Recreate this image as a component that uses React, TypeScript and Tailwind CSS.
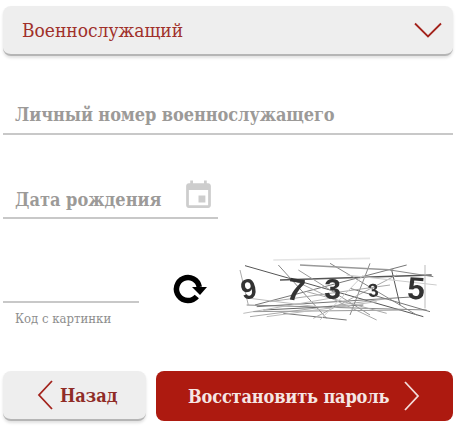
import React from 'react'

const serif = { fontFamily: '"DejaVu Serif Condensed", "DejaVu Serif", "Liberation Serif", serif' }

// captcha noise, coords are in the 3x crop space
const noise: [number, number, number, number, string, number][] = [
  [45, 32, 580, 185, '#555', 3],
  [150, 75, 605, 60, '#555', 4],
  [75, 150, 530, 30, '#777', 3],
  [50, 150, 590, 165, '#888', 3],
  [80, 155, 560, 125, '#777', 3],
  [60, 185, 480, 130, '#aaa', 3],
  [145, 30, 290, 190, '#888', 3],
  [205, 45, 420, 180, '#999', 3],
  [300, 25, 560, 180, '#888', 3],
  [420, 25, 360, 180, '#888', 3],
  [485, 45, 510, 150, '#555', 3],
  [585, 30, 585, 160, '#bbb', 3],
  [30, 45, 55, 150, '#aaa', 3],
  [210, 30, 490, 45, '#999', 4],
  [130, 15, 420, 10, '#e4e4e4', 5],
  [160, 175, 350, 195, '#777', 3],
  [100, 165, 400, 150, '#666', 3],
  [250, 190, 500, 60, '#aaa', 3],
  [360, 100, 600, 170, '#777', 3],
  [120, 140, 480, 90, '#aaa', 3],
  [40, 175, 300, 130, '#bbb', 3],
  [200, 80, 440, 195, '#aaa', 3],
  [350, 60, 620, 90, '#ccc', 3],
  [70, 170, 520, 165, '#999', 3],
  [110, 185, 440, 140, '#bbb', 3],
  [230, 110, 470, 175, '#aaa', 3],
  [480, 45, 610, 65, '#888', 3],
  [270, 195, 400, 60, '#ccc', 3],
  [60, 130, 300, 160, '#bbb', 3],
]

const digits: [string, number, number, number, number][] = [
  ['9', 62, 130, -12, 84],
  ['7', 192, 136, 10, 94],
  ['3', 308, 132, 0, 90],
  ['3', 432, 125, -6, 56],
  ['5', 556, 132, 4, 94],
]

function Captcha() {
  return (
    <svg width="210" height="75" viewBox="0 0 630 225" className="shrink-0 blur-[0.4px]">
      {noise.map(([x1, y1, x2, y2, c, w], i) => (
        <line key={i} x1={x1} y1={y1} x2={x2} y2={y2} stroke={c} strokeWidth={w} />
      ))}
      {digits.map(([d, x, y, r, s], i) => (
        <text
          key={i}
          x={x}
          y={y}
          fontSize={s}
          fontWeight="bold"
          fill="#333"
          textAnchor="middle"
          fontFamily='"Liberation Sans", sans-serif'
          transform={`rotate(${r} ${x} ${y})`}
        >
          {d}
        </text>
      ))}
    </svg>
  )
}

export default function App() {
  return (
    <div className="w-[458px] h-[428px] bg-white overflow-hidden pl-[3px] pr-[5px] pt-[6px]" style={serif}>
      {/* type select */}
      <div className="h-[50px] rounded-lg bg-[#eeeeee] border-b-2 border-[#b5b5b5] shadow-[0_2px_3px_rgba(0,0,0,0.12)] flex items-center justify-between pl-[19px] pr-[11px]">
        <span className="text-[19px] text-[#a0302a]">Военнослужащий</span>
        <svg width="28" height="16" viewBox="0 0 28 16" fill="none" stroke="#a3231c" strokeWidth="1.8">
          <path d="M1 1.5 14 14.5 27 1.5" />
        </svg>
      </div>

      {/* personal number */}
      <div className="mt-[43px] h-[36px] border-b-2 border-[#c8c8c8] pl-[12px] flex items-center">
        <span className="text-[18px] font-bold text-[#9c9a98] mb-[4px] tracking-[-0.08px]">Личный номер военнослужащего</span>
      </div>

      {/* birth date */}
      <div className="mt-[46px] w-[215px] h-[38px] border-b-2 border-[#c8c8c8] pl-[12px] pr-[3px] flex items-center justify-between">
        <span className="text-[18px] font-bold text-[#9c9a98]">Дата рождения</span>
        <svg width="33" height="33" viewBox="0 0 24 24" fill="#cdcdcd" className="mb-[8px]">
          <path d="M17 12h-5v5h5v-5zM16 1v2H8V1H6v2H5c-1.11 0-1.99.9-1.99 2L3 19c0 1.1.89 2 2 2h14c1.1 0 2-.9 2-2V5c0-1.1-.9-2-2-2h-1V1h-2zm3 18H5V8h14v11z" />
        </svg>
      </div>

      {/* captcha */}
      <div className="mt-[36px] h-[75px] flex items-start">
        <div className="w-[136px] shrink-0">
          <div className="h-[48px] border-b-2 border-[#c8c8c8]" />
          <div className="mt-[8px] pl-[12px] text-[13px] leading-[15px] text-[#8e8e8e]">Код с картинки</div>
        </div>
        <svg width="36" height="34" viewBox="0 0 36 34" className="ml-[33px] mt-[17px] shrink-0">
          <path d="M24.8 24.4A11.5 11.5 0 1 1 27.3 15" fill="none" stroke="#000" strokeWidth="5.5" />
          <path d="M20 15H35L28 23Z" fill="#000" />
        </svg>
        <div className="ml-[22px]">
          <Captcha />
        </div>
      </div>

      {/* actions */}
      <div className="mt-[41px] flex gap-[10px] items-start">
        <button className="w-[143px] h-[50px] rounded-lg bg-[#eeeeee] border-b-2 border-[#b5b5b5] shadow-[0_2px_3px_rgba(0,0,0,0.12)] flex items-center pl-[34px] gap-[7px]">
          <svg width="16" height="30" viewBox="0 0 16 30" fill="none" stroke="#a3231c" strokeWidth="1.8">
            <path d="M15 1 2 15l13 14" />
          </svg>
          <span className="text-[18px] font-bold text-[#8f2c26]">Назад</span>
        </button>
        <button className="w-[297px] h-[50px] rounded-lg bg-[#ad1a10] flex items-center pl-[32px] gap-[15px]">
          <span className="text-[18px] font-bold text-[#f5e6e4] tracking-[-0.15px]">Восстановить пароль</span>
          <svg width="16" height="30" viewBox="0 0 16 30" fill="none" stroke="#f3dcda" strokeWidth="1.8">
            <path d="M1 1l13 14L1 29" />
          </svg>
        </button>
      </div>
    </div>
  )
}
